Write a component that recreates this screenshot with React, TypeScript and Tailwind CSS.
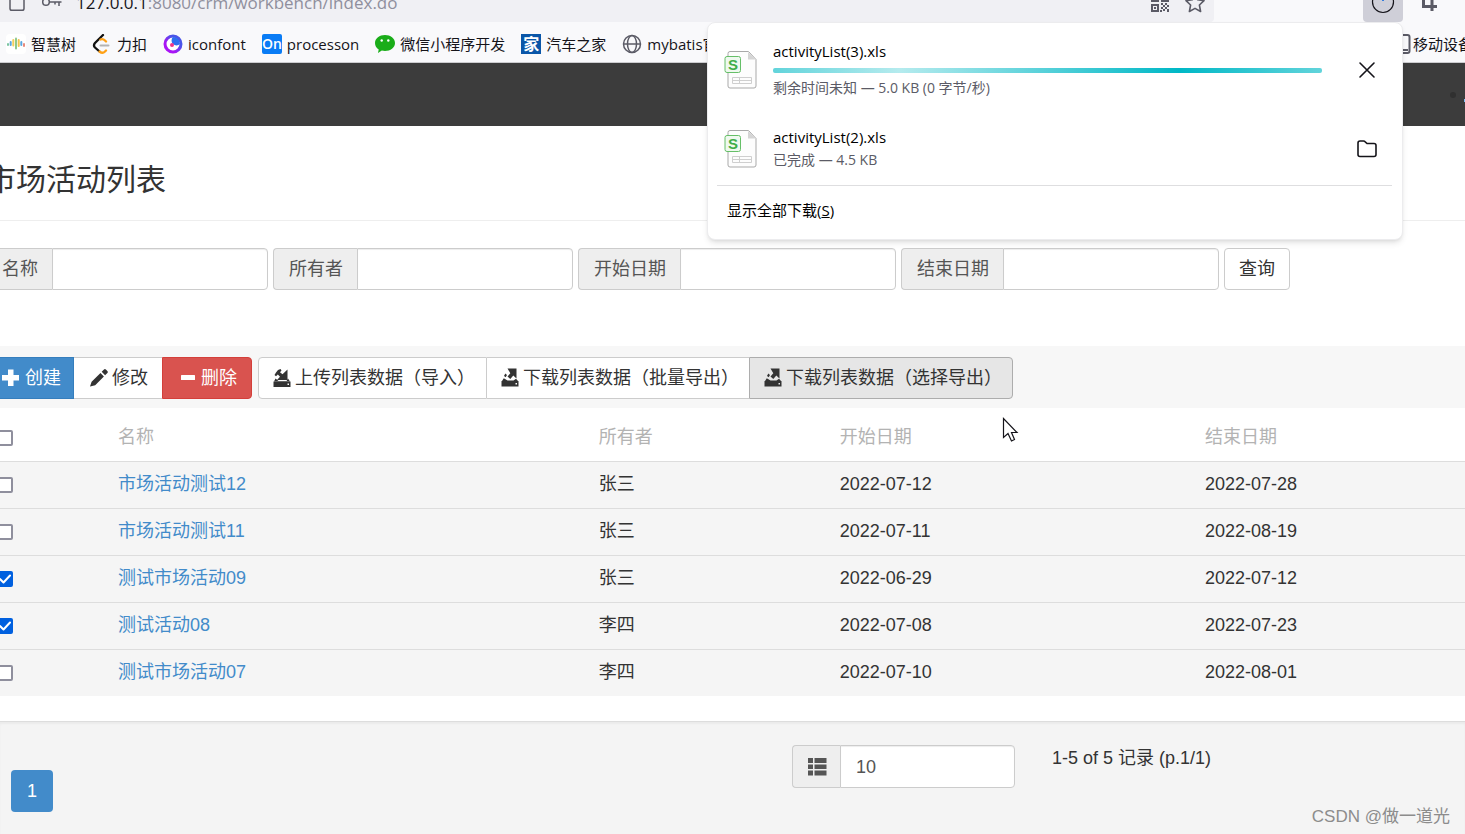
import { useState } from "react";
import type { ReactNode } from "react";

type Activity = {
  id: number;
  name: string;
  owner: string;
  startDate: string;
  endDate: string;
};

const activities: Activity[] = [
  { id: 12, name: "市场活动测试12", owner: "张三", startDate: "2022-07-12", endDate: "2022-07-28" },
  { id: 11, name: "市场活动测试11", owner: "张三", startDate: "2022-07-11", endDate: "2022-08-19" },
  { id: 9, name: "测试市场活动09", owner: "张三", startDate: "2022-06-29", endDate: "2022-07-12" },
  { id: 8, name: "测试活动08", owner: "李四", startDate: "2022-07-08", endDate: "2022-07-23" },
  { id: 7, name: "测试市场活动07", owner: "李四", startDate: "2022-07-10", endDate: "2022-08-01" }
];

const filters = [
  { id: "name", label: "名称" },
  { id: "owner", label: "所有者" },
  { id: "startDate", label: "开始日期" },
  { id: "endDate", label: "结束日期" }
];

function TreeIcon() {
  return (
    <svg width="20" height="20" viewBox="0 0 20 20" strokeWidth="2" strokeLinecap="round">
      <rect width="20" height="20" rx="4" fill="#fff" />
      <path d="M2 10v1" stroke="#7cc4a0" />
      <path d="M4.700 8v3" stroke="#5aa7e0" />
      <path d="M7.300 6v5.500" stroke="#f2cf5b" />
      <path d="M10 4.500v10" stroke="#8fc98b" />
      <path d="M12.700 6v6" stroke="#f0c64b" />
      <path d="M15.300 8v3" stroke="#5aa7e0" />
      <path d="M18 10v2" stroke="#e88a7c" />
    </svg>
  );
}

function LeetcodeIcon() {
  return (
    <svg width="20" height="20" viewBox="0 0 20 20" fill="none" strokeWidth="2" strokeLinecap="round">
      <path d="M7.500 17.500L3 13.500q-2-2 0-4.500L11 1" stroke="#111" strokeWidth="2.300" />
      <path d="M8.500 5.500q2.500-1 4.500 1l1 1M7.500 17.500q3 2.500 5.500 0l1-1" stroke="#ffa116" strokeWidth="2.300" />
      <path d="M8.500 11.500h8" stroke="#b3b3b3" />
    </svg>
  );
}

function IconfontIcon() {
  return (
    <svg width="20" height="20" viewBox="0 0 20 20">
      <defs>
        <linearGradient id="iconfont-ring" x1="0" y1="1" x2="1" y2="0">
          <stop offset="0.3" stopColor="#a914f5" />
          <stop offset="0.7" stopColor="#4a55e8" />
        </linearGradient>
      </defs>
      <circle cx="10" cy="10" r="8" fill="#fff" stroke="url(#iconfont-ring)" strokeWidth="3" />
      <path d="M10 3a4.500 4.500 0 0 0 7 7 7 7 0 0 0-7-7z" fill="#2d6ff0" />
      <circle cx="9" cy="11" r="2" fill="#f0338a" />
    </svg>
  );
}

function WechatIcon() {
  return (
    <svg width="20" height="20" viewBox="0 0 20 20">
      <path d="M10 1c5.500 0 10 3.500 10 8s-4.500 8-10 8c-1.200 0-2.200-.1-3.200-.4L3 19l.7-3.500C1.400 14 0 12 0 9c0-4.500 4.500-8 10-8z" fill="#1aad19" />
      <circle cx="6.700" cy="6.500" r="1.200" fill="#fff" />
      <circle cx="13.300" cy="6.500" r="1.200" fill="#fff" />
    </svg>
  );
}

function GlobeIcon() {
  return (
    <svg width="20" height="20" viewBox="0 0 20 20" fill="none" stroke="#5b5b66" strokeWidth="1.500">
      <circle cx="10" cy="10" r="8.500" />
      <ellipse cx="10" cy="10" rx="4.500" ry="8.500" />
      <path d="M1.500 10h17" />
    </svg>
  );
}

function QrIcon() {
  return (
    <svg width="18" height="18" viewBox="0 0 18 18" fill="#5b5b66">
      <path d="M0 0h8v8H0zM2 2v4h4V2zM10 0h8v8h-8zM12 2v4h4V2zM0 10h8v8H0zM2 12v4h4v-4z" fillRule="evenodd" />
      <path d="M3 13h2v2H3zM10 9h2v2h-2zM14 9h2v2h-2zM12 11h2v2h-2zM16 11h2v2h-2zM10 13h2v2h-2zM14 13h2v2h-2zM12 15h2v2h-2zM16 15h2v3h-2zM9 16h2v2H9z" />
    </svg>
  );
}

function StarIcon() {
  return (
    <svg width="20" height="20" viewBox="0 0 20 20" fill="none" stroke="#5b5b66" strokeWidth="1.600" strokeLinejoin="round">
      <path d="M10 1l2.700 5.800 6.300.8-4.600 4.400 1.200 6.500L10 15.400l-5.600 3.100L5.600 12 1 7.600l6.300-.8z" />
    </svg>
  );
}

function ImportIcon() {
  return (
    <svg width="18" height="20" viewBox="0 0 18 20" fill="currentColor">
      <path d="M14.500 1.500V12H4l3-3.300L4.800 6.500 3 8.300 1.500 7 3 4.500 5 2l2.500-1 1 1.500L7 4.300l2.500 2z" />
      <path d="M2.500 10.500l3 2.500h8l1.500-2.500L17 13.500H1z" />
      <path d="M.500 13.500h17V19H.500zM14.500 15.500V17H16v-1.500z" fillRule="evenodd" />
    </svg>
  );
}

function ExportIcon() {
  return (
    <svg width="18" height="20" viewBox="0 0 18 20" fill="currentColor">
      <path d="M6.500 .500H15.500v10l-3.200-3-3 3.500-2.800-2.500 2.800-3.200z" />
      <path d="M4.300 5.500L6 7 4.700 9.200 3 8zM2.800 10.300L6.500 12.500h6l2.500-1.800 2 2.300H1z" />
      <path d="M.500 13h17v5.500H.500zM14.500 15v1.500H16V15z" fillRule="evenodd" />
    </svg>
  );
}

function PlusIcon() {
  return (
    <svg width="18" height="20" viewBox="0 0 18 20" fill="currentColor">
      <path d="M6 1.500h5.500V7H17v5.500h-5.500V18H6v-5.500H0V7h6z" />
    </svg>
  );
}

function MinusIcon() {
  return (
    <svg width="18" height="20" viewBox="0 0 18 20" fill="currentColor">
      <rect x="2" y="7" width="14" height="5" rx="0.500" />
    </svg>
  );
}

function PencilIcon() {
  return (
    <svg width="18" height="20" viewBox="0 0 18 20" fill="currentColor">
      <path d="M0 18.500l1.600-4.800 8.900-8.700 3.400 3.400-8.700 8.800zM11.700 3.800l2.300-2.300q.9-.9 1.900.1l1.400 1.400q1 1 .1 1.900l-2.300 2.300z" />
    </svg>
  );
}

function SheetIcon() {
  return (
    <svg width="34" height="40" viewBox="0 0 34 40" fill="none" className="shrink-0">
      <path d="M6 1.500h18.500l7.500 8V36a2 2 0 0 1-2 2H6a2 2 0 0 1-2-2V3.500a2 2 0 0 1 2-2z" fill="#fdfdfd" stroke="#a9a9a9" />
      <path d="M24 2v7.500h8z" fill="#d5d5d5" />
      <path d="M8.500 27.500h19v6h-19zM8.500 30.500h19M15.500 27.500v6" stroke="#cfcfcf" />
      <rect x="1" y="6.500" width="15.500" height="16" rx="2" fill="#eff9ef" stroke="#66bf68" />
      <text x="9" y="20" textAnchor="middle" fontSize="15" fontWeight="bold" fontFamily="Liberation Sans, sans-serif" fill="#3fae49">
        S
      </text>
    </svg>
  );
}

function Bookmark({ icon, children }: { icon: ReactNode; children: ReactNode }) {
  return (
    <a href="#" className="flex shrink-0 items-center gap-[5px]">
      {icon}
      <span>{children}</span>
    </a>
  );
}

function BrowserBars() {
  return (
    <header className="font-['Open_Sans','Noto_Sans_CJK_SC',sans-serif] text-[#15141a]">
      <div className="flex h-[22px] items-start justify-between overflow-hidden bg-[#f9f9fb]">
        <div className="flex h-full min-w-0 flex-1 items-start rounded-br bg-[#f0f0f4] pl-2">
          <svg width="18" height="22" viewBox="0 0 18 22" fill="none" stroke="#5b5b66" strokeWidth="1.500" className="shrink-0">
            <path d="M2 0v8.500q0 1.800 1.800 1.800h10.400q1.800 0 1.800-1.800V0" />
          </svg>
          <svg width="22" height="22" viewBox="0 0 22 22" fill="none" stroke="#5b5b66" strokeWidth="1.500" className="ml-4 shrink-0">
            <circle cx="4" cy="2" r="3.300" />
            <path d="M7 2h12.500M17 2v4M13 2v2.500" />
          </svg>
          <p className="-mt-2 ml-3 flex-1 whitespace-nowrap text-[17px] leading-[22px]">
            127.0.0.1<span className="text-[#8f8f9d]">:8080/crm/workbench/index.do</span>
          </p>
          <div className="-mt-[7px] mr-[9px] flex shrink-0 gap-4">
            <button type="button" aria-label="二维码">
              <QrIcon />
            </button>
            <button type="button" aria-label="收藏">
              <StarIcon />
            </button>
          </div>
        </div>
        <div className="flex h-full w-[251px] shrink-0 items-start justify-end pr-6">
          <button type="button" aria-label="下载" className="h-full w-10 rounded-b bg-[#cfcfd8]">
            <svg width="40" height="22" viewBox="0 0 40 22" fill="none">
              <circle cx="20" cy="2" r="10.500" stroke="#15141a" strokeWidth="1.200" />
              <path d="M20 0v1" stroke="#0060df" strokeWidth="1.500" />
            </svg>
          </button>
          <button type="button" aria-label="扩展" className="ml-4">
            <svg width="22" height="22" viewBox="0 0 22 22" fill="none" stroke="#5b5b66" strokeWidth="3">
              <path d="M4.500 0v6.500h13.500M13 0v11" />
            </svg>
          </button>
        </div>
      </div>
      <nav className="flex h-[41px] items-center justify-between overflow-hidden border-b border-[#cccccf] bg-[#f9f9fb] pl-[6px] text-[15px] leading-5 whitespace-nowrap">
        <div className="flex gap-4 pt-1">
          <Bookmark icon={<TreeIcon />}>智慧树</Bookmark>
          <Bookmark icon={<LeetcodeIcon />}>力扣</Bookmark>
          <Bookmark icon={<IconfontIcon />}>iconfont</Bookmark>
          <Bookmark
            icon={
              <span className="flex h-5 w-5 items-center justify-center rounded-xs bg-[#0a7cf5] text-sm font-semibold text-white">On</span>
            }
          >
            processon
          </Bookmark>
          <Bookmark icon={<WechatIcon />}>微信小程序开发</Bookmark>
          <Bookmark
            icon={<span className="flex h-5 w-5 items-center justify-center bg-[#0a56a8] text-base font-bold text-white">家</span>}
          >
            汽车之家
          </Bookmark>
          <Bookmark icon={<GlobeIcon />}>mybatis官网</Bookmark>
        </div>
        <div className="flex w-[74px] shrink-0 items-center overflow-hidden pt-1">
          <svg width="20" height="20" viewBox="0 0 20 20" fill="none" stroke="#5b5b66" strokeWidth="2" className="shrink-0">
            <rect x="6" y="1" width="12.500" height="18" rx="2" />
            <path d="M10 16h7" />
          </svg>
          <a href="#" className="ml-[2px]">移动设备</a>
        </div>
      </nav>
    </header>
  );
}

function DownloadsPanel() {
  return (
    <section
      aria-label="下载"
      className="absolute top-[22px] right-[62px] w-[696px] rounded-lg border border-[#ececee] bg-white pr-[10px] pl-[9px] font-['Open_Sans','Noto_Sans_CJK_SC',sans-serif] text-[14px] leading-5 text-[#15141a] shadow-md"
    >
      <div className="flex items-center pt-[18px] pr-4 pl-[7px]">
        <SheetIcon />
        <div className="ml-[15px] flex-1">
          <p className="text-[15px] text-black">activityList(3).xls</p>
          <div
            role="progressbar"
            aria-label="activityList(3).xls"
            className="mt-[7px] h-[5px] rounded-xs bg-linear-[90deg,#62d4db_0%,#b5ebee_23%,#00b8c6_74%,#62d4db_100%]"
          />
          <p className="mt-[5px] text-[#5b5b66]">剩余时间未知 — 5.0 KB (0 字节/秒)</p>
        </div>
        <button type="button" aria-label="取消" className="ml-9">
          <svg width="18" height="18" viewBox="0 0 18 18" fill="none" stroke="#15141a" strokeWidth="1.600" strokeLinecap="round">
            <path d="M2 2l14 14M16 2L2 16" />
          </svg>
        </button>
      </div>
      <div className="mt-[29px] flex items-center pr-[15px] pb-[15px] pl-[7px]">
        <SheetIcon />
        <div className="ml-[15px] flex-1">
          <p className="text-[15px] text-black">activityList(2).xls</p>
          <p className="mt-[3px] text-[#5b5b66]">已完成 — 4.5 KB</p>
        </div>
        <button type="button" aria-label="打开文件夹">
          <svg width="20" height="20" viewBox="0 0 20 20" fill="none" stroke="#15141a" strokeWidth="1.600" strokeLinejoin="round">
            <path d="M1 4q0-2 2-2h3.500q1 0 1.700.8L10 4.500h7q2 0 2 2V15.500q0 2-2 2H3q-2 0-2-2z" />
          </svg>
        </button>
      </div>
      <div className="border-t border-[#dedee0] pt-[14px] pb-[18px] pl-[10px]">
        <button type="button" className="text-[15px] text-black">
          显示全部下载(<span className="underline">S</span>)
        </button>
      </div>
    </section>
  );
}

function SearchForm() {
  return (
    <form className="mt-[27px] flex gap-[5px]" onSubmit={(e) => e.preventDefault()}>
      {filters.map((filter) => (
        <div key={filter.id} className="flex h-[42px]">
          <label
            htmlFor={filter.id}
            className="flex items-center rounded-l border border-r-0 border-[#ccc] bg-[#eee] pr-[14px] pl-[15px] text-[#555]"
          >
            {filter.label}
          </label>
          <input
            id={filter.id}
            type="text"
            className="w-[216px] rounded-r border border-[#ccc] bg-white px-4 text-[#555] shadow-[inset_0_1px_1px_rgba(0,0,0,0.075)] outline-none"
          />
        </div>
      ))}
      <button type="submit" className="h-[42px] rounded border border-[#ccc] bg-white px-[14px]">
        查询
      </button>
    </form>
  );
}

function Toolbar() {
  return (
    <div className="mt-14 -ml-6 flex gap-[6px] bg-[#f7f7f7] pt-[11px] pb-[9px] whitespace-nowrap">
      <div className="flex h-[42px]">
        <button type="button" className="flex w-[112px] items-center justify-end gap-[5px] border border-[#357ebd] bg-[#428bca] pr-3 text-white">
          <PlusIcon /> 创建
        </button>
        <button type="button" className="flex w-[88px] items-center gap-1 border-y border-[#ccc] bg-white pl-4">
          <PencilIcon /> 修改
        </button>
        <button type="button" className="flex w-[90px] items-center gap-1 rounded-r border border-[#d43f3a] bg-[#d9534f] pl-4 text-white">
          <MinusIcon /> 删除
        </button>
      </div>
      <div className="flex h-[42px]">
        <button type="button" className="flex w-[229px] items-center gap-1 rounded-l border border-[#ccc] bg-white pl-[14px]">
          <ImportIcon /> 上传列表数据（导入）
        </button>
        <button type="button" className="flex w-[262px] items-center gap-1 border-y border-[#ccc] bg-white pl-[14px]">
          <ExportIcon /> 下载列表数据（批量导出）
        </button>
        <button type="button" className="flex w-[264px] items-center gap-1 rounded-r border border-[#adadad] bg-[#e6e6e6] pl-[14px]">
          <ExportIcon /> 下载列表数据（选择导出）
        </button>
      </div>
    </div>
  );
}

function Checkbox({ label, checked, onChange }: { label: string; checked: boolean; onChange: () => void }) {
  return (
    <span className="mt-px grid h-4 w-4 place-items-center">
      <input
        type="checkbox"
        aria-label={label}
        checked={checked}
        onChange={onChange}
        className="col-start-1 row-start-1 h-4 w-4 appearance-none rounded-xs border-2 border-[#8f8f9d] bg-white checked:border-[#0060df] checked:bg-[#0060df]"
      />
      {checked ? (
        <svg width="16" height="16" viewBox="0 0 16 16" fill="none" stroke="#fff" strokeWidth="2" className="pointer-events-none col-start-1 row-start-1">
          <path d="M3 8l3.500 3.500L13 4.500" strokeLinecap="round" strokeLinejoin="round" />
        </svg>
      ) : null}
    </span>
  );
}

function ActivityTable() {
  const [selected, setSelected] = useState<number[]>([9, 8]);
  const allSelected = selected.length === activities.length;

  function toggle(id: number) {
    setSelected(selected.includes(id) ? selected.filter((x) => x !== id) : [...selected, id]);
  }

  return (
    <table className="w-full table-fixed text-left">
      <thead>
        <tr className="h-[53px] text-[#b3b3b3]">
          <th className="w-[122px] pt-[6px] pl-[11px] font-normal">
            <Checkbox
              label="全选"
              checked={allSelected}
              onChange={() => setSelected(allSelected ? [] : activities.map((x) => x.id))}
            />
          </th>
          <th className="w-[32.5%] px-[10px] pt-[6px] font-normal">名称</th>
          <th className="w-[16.3%] px-[10px] pt-[6px] font-normal">所有者</th>
          <th className="w-[24.7%] px-[10px] pt-[6px] font-normal">开始日期</th>
          <th className="px-[10px] pt-[6px] font-normal">结束日期</th>
        </tr>
      </thead>
      <tbody>
        {activities.map((item) => (
          <tr key={item.id} className="h-[47px] border-t border-[#ddd] bg-[#f5f5f5]">
            <td className="pl-[11px]">
              <Checkbox label={item.name} checked={selected.includes(item.id)} onChange={() => toggle(item.id)} />
            </td>
            <td className="px-[10px] pb-[2px]">
              <a href="#" className="text-[#428bca]">
                {item.name}
              </a>
            </td>
            <td className="px-[10px] pb-[2px]">{item.owner}</td>
            <td className="px-[10px] pb-[2px]">{item.startDate}</td>
            <td className="px-[10px] pb-[2px]">{item.endDate}</td>
          </tr>
        ))}
      </tbody>
    </table>
  );
}

function Pagination() {
  return (
    <footer className="mt-[25px] flex flex-1 items-start border-t border-[#ddd] bg-[#f4f4f4] pt-[23px] pl-[11px] shadow-[inset_0_2px_2px_rgba(0,0,0,0.04)]">
      <button type="button" className="mt-[25px] h-[42px] w-[42px] rounded bg-[#428bca] text-white">
        1
      </button>
      <div className="ml-[739px] flex h-[43px]">
        <label htmlFor="pageSize" aria-label="每页条数" className="flex w-12 items-center justify-center rounded-l border border-r-0 border-[#ccc] bg-[#eee] text-[#555]">
          <svg width="20" height="18" viewBox="0 0 20 18" fill="currentColor">
            <path d="M1 0h5v5H1zM7.500 0H19.500v5H7.500zM1 6.500h5v4.500H1zM7.500 6.500H19.500v4.500H7.500zM1 12.500h5v5H1zM7.500 12.500H19.500v5H7.500z" />
          </svg>
        </label>
        <input
          id="pageSize"
          type="text"
          defaultValue="10"
          className="w-[175px] rounded-r border border-[#ccc] bg-white px-[15px] text-[#555] shadow-[inset_0_1px_1px_rgba(0,0,0,0.075)] outline-none"
        />
      </div>
      <p className="ml-[37px]">1-5 of 5 记录 (p.1/1)</p>
    </footer>
  );
}

export default function App() {
  return (
    <div className="relative flex min-h-screen flex-col overflow-hidden bg-white font-['Liberation_Sans','Noto_Sans_CJK_SC',sans-serif] text-[18px] leading-[26px] text-[#333]">
      <BrowserBars />
      <div className="flex h-[63px] items-center justify-end gap-2 bg-[#3c3c3c]">
        <span className="h-[6px] w-[6px] rounded-full bg-[#303030]" />
        <span className="mt-3 h-[3px] w-px bg-[#7cc0f5]" />
      </div>
      <main className="-ml-3.5">
        <div className="border-b border-[#eee] pt-[34px] pb-[20px]">
          <h1 className="text-[30px] leading-10">市场活动列表</h1>
        </div>
        <SearchForm />
        <Toolbar />
        <ActivityTable />
      </main>
      <Pagination />
      <DownloadsPanel />
      <svg width="18" height="26" viewBox="0 0 18 26" fill="#fff" stroke="#15141a" strokeWidth="1.200" className="absolute top-[417px] left-[1002px]">
        <path d="M1.500 1.500v19l4.500-4 3.500 7.500 3-1.500L9.500 15.500h5.500z" />
      </svg>
      <p className="absolute right-[15px] bottom-1 text-[17px] text-[#8c8c8c]">CSDN @做一道光</p>
    </div>
  );
}
